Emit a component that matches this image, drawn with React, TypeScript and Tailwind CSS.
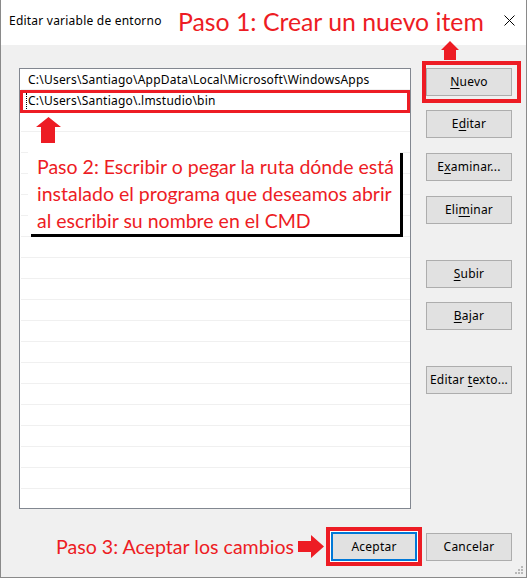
import React from "react";

const UI = { fontFamily: '"Noto Sans", "Open Sans", sans-serif', letterSpacing: "0.22px" };
const CAL = { fontFamily: 'Lato, "Open Sans", sans-serif', letterSpacing: "0px" };

function Btn({ children, className = "" }: { children: React.ReactNode; className?: string }) {
  return (
    <div
      className={`w-[86px] h-[28px] bg-[#e1e1e1] border border-[#adadad] flex items-center justify-center text-[12px] text-black leading-none ${className}`}
    >
      <span className="whitespace-pre">{children}</span>
    </div>
  );
}

function U({ children }: { children: React.ReactNode }) {
  return <span className="underline underline-offset-[2px] decoration-1">{children}</span>;
}

export default function App() {
  const rows = Array.from({ length: 21 });
  return (
    <div
      className="w-[527px] h-[578px] bg-[#f0f0f0] border-x border-b border-[#8a8a8a] flex flex-col relative overflow-hidden"
      style={UI}
    >
      {/* Title bar */}
      <div className="h-[45px] bg-white flex items-start shrink-0 relative">
        <span className="ml-[8px] mt-[13px] text-[12px] leading-[16px] text-black">Editar variable de entorno</span>
        <span
          className="absolute left-[177px] top-[7px] text-[24.8px] leading-[30px] text-[#ed1c24] whitespace-nowrap"
          style={CAL}
        >
          Paso 1: Crear un nuevo item
        </span>
        <svg className="absolute left-[503px] top-[15px]" width="11" height="11" viewBox="0 0 11 11">
          <path d="M0.5 0.5 L10.5 10.5 M10.5 0.5 L0.5 10.5" stroke="#000" strokeWidth="1" />
        </svg>
      </div>

      {/* Arrow 1 (up, to Nuevo) */}
      <svg className="absolute left-[440px] top-[41px]" width="18" height="19" viewBox="0 0 18 19">
        <polygon points="9,0 18,9 15,9 15,19 3,19 3,9 0,9" fill="#ed1c24" />
      </svg>

      {/* Body */}
      <div className="flex pt-[23px] pl-[18px]">
        <div className="w-[392px] h-[441px] border border-[#828790] bg-white relative overflow-hidden">
          {rows.map((_, i) => (
            <div
              key={i}
              className="h-[21px] border-b border-[#f0f0f0] ml-[1px] pl-[7px] pt-[1px] text-[12px] leading-[19px] text-black whitespace-nowrap"
            >
              {i === 0 && "C:\\Users\\Santiago\\AppData\\Local\\Microsoft\\WindowsApps"}
              {i === 1 && (
                <span className="relative">
                  <span className="absolute left-[-2px] top-[1px] h-[18px] border-l border-dotted border-black" />
                  C:\Users\Santiago\.lmstudio\bin
                </span>
              )}
            </div>
          ))}

          {/* Red box around row 2 */}
          <div className="absolute left-0 top-[21px] w-[390px] h-[23px] border-[3px] border-[#ed1c24]" />

          {/* Arrow 2 (up) */}
          <svg className="absolute left-[16px] top-[48px]" width="25" height="26" viewBox="0 0 25 26">
            <polygon points="12.5,0 25,10 19,10 19,26 5,26 5,10 0,10" fill="#ed1c24" />
          </svg>

          {/* Callout */}
          <div
            className="absolute left-[8px] top-[81px] w-[372px] h-[84px] bg-white shadow-[3px_3px_0_0_#000] pl-[9px] pt-[3px] text-[19.5px] leading-[27px] text-[#ed1c24] whitespace-nowrap"
            style={CAL}
          >
            <div>Paso 2: Escribir o pegar la ruta dónde está</div>
            <div>instalado el programa que deseamos abrir</div>
            <div>al escribir su nombre en el CMD</div>
          </div>
        </div>

        {/* Side buttons */}
        <div className="ml-[15px] flex flex-col relative">
          <div className="absolute left-[-4px] top-[-7px] w-[99px] h-[42px] border-[4px] border-[#ed1c24]" />
          <Btn>
            <U>N</U>uevo
          </Btn>
          <Btn className="mt-[14px]">
            E<U>d</U>itar
          </Btn>
          <Btn className="mt-[15px]">
            E<U>x</U>aminar...
          </Btn>
          <Btn className="mt-[15px]">
            Eli<U>m</U>inar
          </Btn>
          <Btn className="mt-[36px]">
            <U>S</U>ubir
          </Btn>
          <Btn className="mt-[14px]">
            <U>B</U>ajar
          </Btn>
          <Btn className="mt-[36px]">
            Editar <U>t</U>exto...
          </Btn>
        </div>
      </div>

      {/* Bottom row */}
      <div className="flex items-center justify-end mt-[18px] pr-[14px]">
        <span className="text-[19.6px] leading-[26px] text-[#ed1c24] whitespace-nowrap" style={CAL}>
          Paso 3: Aceptar los cambios
        </span>
        <svg className="ml-[4px]" width="26" height="23" viewBox="0 0 26 23">
          <polygon points="0,6 13,6 13,0 26,11.5 13,23 13,17 0,17" fill="#ed1c24" />
        </svg>
        <div className="ml-[2px] w-[96px] h-[39px] border-[4px] border-[#ed1c24] bg-white p-[1px] flex items-center justify-center">
          <div className="w-[86px] h-[29px] bg-[#e1e1e1] border-2 border-[#0078d7] flex items-center justify-center text-[12px] text-black leading-none">
            Aceptar
          </div>
        </div>
        <Btn className="ml-[4px]">Cancelar</Btn>
      </div>

      {/* Resize grip */}
      <svg className="absolute right-[2px] bottom-[2px]" width="9" height="9" viewBox="0 0 9 9">
        <rect x="6" y="0" width="2" height="2" fill="#b8b8b8" />
        <rect x="3" y="3" width="2" height="2" fill="#b8b8b8" />
        <rect x="6" y="3" width="2" height="2" fill="#b8b8b8" />
        <rect x="0" y="6" width="2" height="2" fill="#b8b8b8" />
        <rect x="3" y="6" width="2" height="2" fill="#b8b8b8" />
        <rect x="6" y="6" width="2" height="2" fill="#b8b8b8" />
      </svg>
    </div>
  );
}
